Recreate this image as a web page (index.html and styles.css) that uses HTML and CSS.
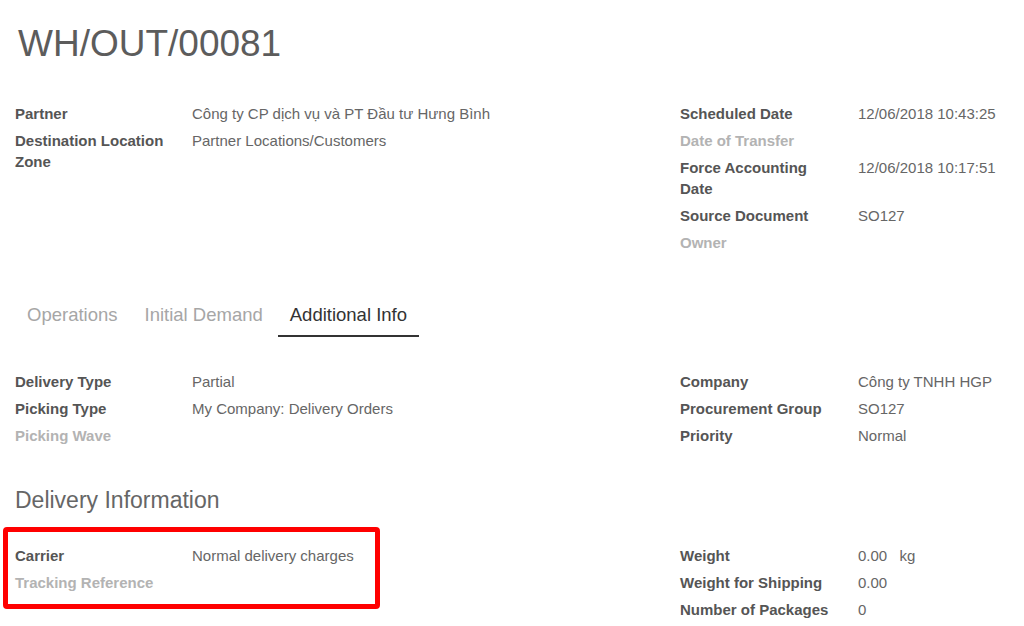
FILE: index.html
```html
<!DOCTYPE html>
<html lang="en">
<head>
    <meta charset="UTF-8">
    <title>WH/OUT/00081</title>
    <link rel="stylesheet" href="styles.css">
</head>
<body>
    <div class="sheet">
        <h1 class="title">WH/OUT/00081</h1>

        <div class="group-row top-fields">
            <div class="group left">
                <div class="label">Partner</div>
                <div class="value">Công ty CP dịch vụ và PT Đầu tư Hưng Bình</div>
                <div class="label">Destination Location Zone</div>
                <div class="value">Partner Locations/Customers</div>
            </div>
            <div class="group right">
                <div class="label">Scheduled Date</div>
                <div class="value">12/06/2018 10:43:25</div>
                <div class="label empty">Date of Transfer</div>
                <div class="value"></div>
                <div class="label">Force Accounting Date</div>
                <div class="value">12/06/2018 10:17:51</div>
                <div class="label">Source Document</div>
                <div class="value">SO127</div>
                <div class="label empty">Owner</div>
                <div class="value"></div>
            </div>
        </div>

        <div class="tabs">
            <div class="tab">Operations</div>
            <div class="tab">Initial Demand</div>
            <div class="tab active">Additional Info</div>
        </div>

        <div class="group-row info-fields">
            <div class="group left">
                <div class="label">Delivery Type</div>
                <div class="value">Partial</div>
                <div class="label">Picking Type</div>
                <div class="value">My Company: Delivery Orders</div>
                <div class="label empty">Picking Wave</div>
                <div class="value"></div>
            </div>
            <div class="group right">
                <div class="label">Company</div>
                <div class="value">Công ty TNHH HGP</div>
                <div class="label">Procurement Group</div>
                <div class="value">SO127</div>
                <div class="label">Priority</div>
                <div class="value">Normal</div>
            </div>
        </div>

        <h2 class="section-title">Delivery Information</h2>

        <div class="group-row delivery-fields">
            <div class="group left highlighted">
                <div class="label">Carrier</div>
                <div class="value">Normal delivery charges</div>
                <div class="label empty">Tracking Reference</div>
                <div class="value"></div>
                <div class="mark"></div>
            </div>
            <div class="group right">
                <div class="label">Weight</div>
                <div class="value">0.00 <span class="unit">kg</span></div>
                <div class="label">Weight for Shipping</div>
                <div class="value">0.00</div>
                <div class="label">Number of Packages</div>
                <div class="value">0</div>
            </div>
        </div>
    </div>
</body>
</html>
```

FILE: styles.css
```css
body {
    margin: 0;
    background-color: #ffffff;
    font-family: "Liberation Sans", Arial, sans-serif;
    color: #666666;
    overflow: hidden;
}
.sheet {
    padding: 0 15px;
}
.title {
    margin: 0;
    padding-top: 22px;
    font-size: 37px;
    font-weight: normal;
    line-height: 43px;
    color: #5c5c5c;
    padding-left: 3px;
}
.group-row {
    display: flex;
}
.top-fields {
    margin-top: 35px;
}
.group {
    display: grid;
    align-content: start;
    font-size: 15px;
    line-height: 21px;
}
.group.left {
    width: 665px;
    grid-template-columns: 177px 1fr;
}
.group.right {
    flex: 1;
    grid-template-columns: 178px 1fr;
}
.label {
    padding: 3px 16px 3px 0;
    font-weight: bold;
    color: #555555;
}
.label.empty {
    color: #b3b3b3;
}
.value {
    padding: 3px 0;
    color: #666666;
}
.unit {
    margin-left: 8px;
}
.tabs {
    display: flex;
    gap: 3px;
    margin-top: 38px;
}
.tab {
    padding: 10px 12px 9px;
    font-size: 18.5px;
    line-height: 22px;
    color: #a6a6a6;
    border-bottom: 2px solid transparent;
}
.tab.active {
    color: #333333;
    border-bottom-color: #333333;
}
.info-fields {
    margin-top: 31px;
}
.section-title {
    margin: 0;
    margin-top: 38px;
    font-size: 23px;
    font-weight: normal;
    line-height: 26px;
    color: #666666;
}
.delivery-fields {
    margin-top: 29px;
}
.highlighted {
    position: relative;
}
.mark {
    position: absolute;
    left: -12px;
    top: -15px;
    width: 367px;
    height: 72px;
    border: 5px solid #ff0000;
    border-radius: 4px;
}
```
